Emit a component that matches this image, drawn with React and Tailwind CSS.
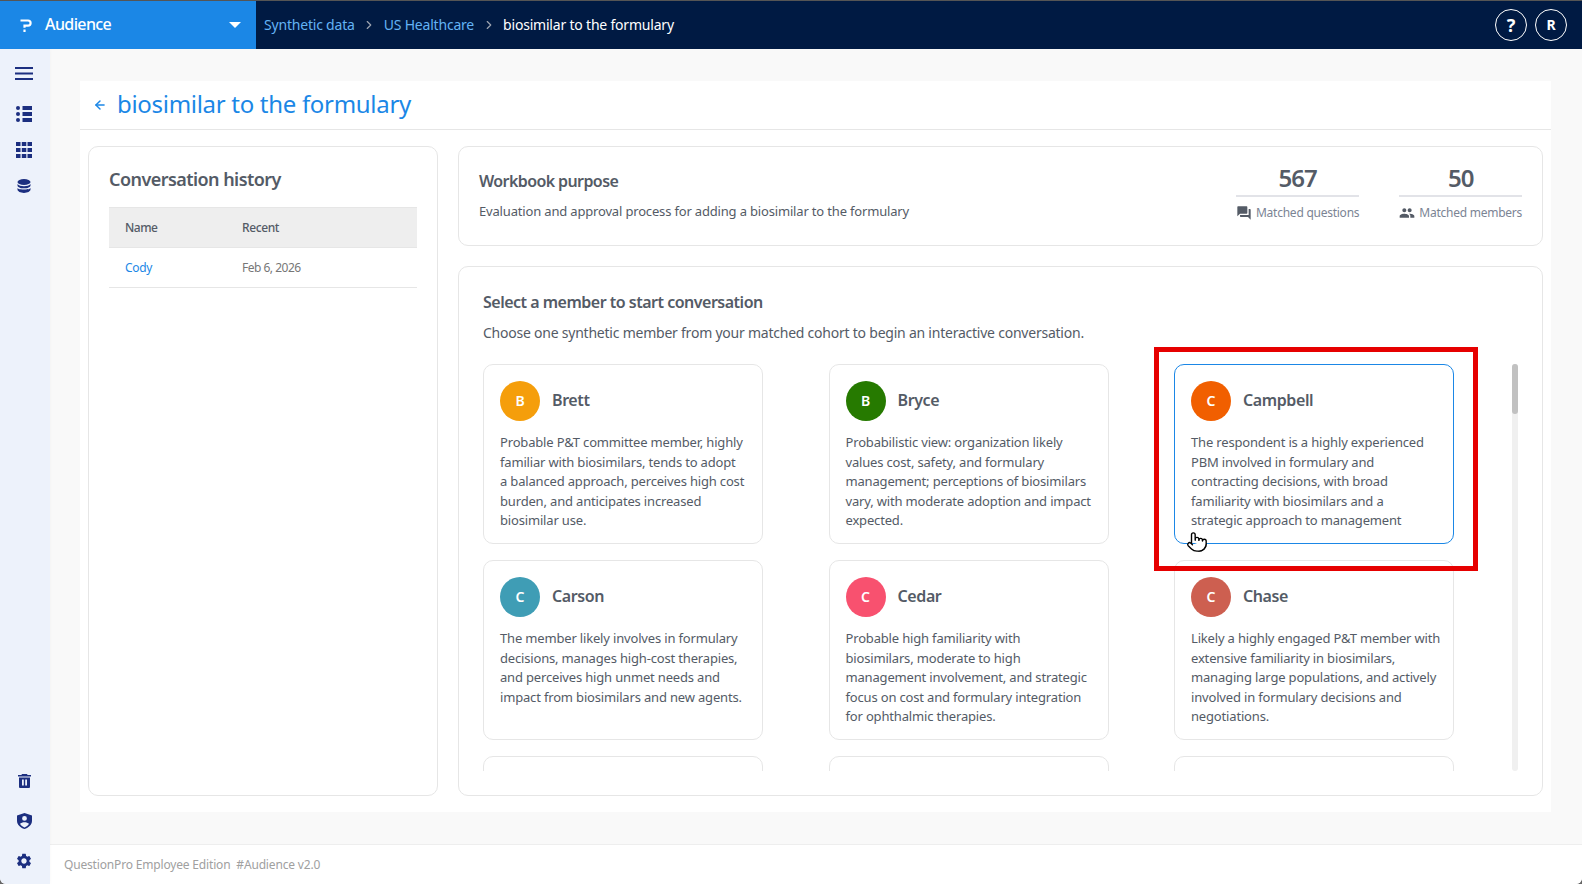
import { MdSettings, MdPeople, MdQuestionAnswer } from 'react-icons/md'
import { ArrowLeft, ChevronRight, Pointer } from 'lucide-react'

// line breaks follow the wrap of the original cards
const MEMBERS = [
  { name: 'Brett', color: 'bg-[#f59e0b]', text: 'Probable P&T committee member, highly\nfamiliar with biosimilars, tends to adopt\na balanced approach, perceives high cost\nburden, and anticipates increased\nbiosimilar use.' },
  { name: 'Bryce', color: 'bg-[#267a00]', text: 'Probabilistic view: organization likely\nvalues cost, safety, and formulary\nmanagement; perceptions of biosimilars\nvary, with moderate adoption and impact\nexpected.' },
  { name: 'Campbell', color: 'bg-[#f15f00]', active: true, text: 'The respondent is a highly experienced\nPBM involved in formulary and\ncontracting decisions, with broad\nfamiliarity with biosimilars and a\nstrategic approach to management' },
  { name: 'Carson', color: 'bg-[#3f9db5]', text: 'The member likely involves in formulary\ndecisions, manages high-cost therapies,\nand perceives high unmet needs and\nimpact from biosimilars and new agents.' },
  { name: 'Cedar', color: 'bg-[#f8516f]', text: 'Probable high familiarity with\nbiosimilars, moderate to high\nmanagement involvement, and strategic\nfocus on cost and formulary integration\nfor ophthalmic therapies.' },
  { name: 'Chase', color: 'bg-[#cd5f50]', text: 'Likely a highly engaged P&T member with\nextensive familiarity in biosimilars,\nmanaging large populations, and actively\ninvolved in formulary decisions and\nnegotiations.' },
]

function MemberCard({ member }) {
  return (
    <div className={`h-[180px] w-[280px] rounded-[10px] border bg-white px-4 pt-4 ${member.active ? 'border-[#1b87e6]' : 'border-[#e6e6e6]'}`}>
      <div className="flex items-center gap-3">
        <div className={`flex h-10 w-10 items-center justify-center rounded-full text-sm font-semibold text-white ${member.color}`}>{member.name[0]}</div>
        <div className="pb-0.5 text-base font-semibold tracking-[-0.4px] text-[#545b66]">{member.name}</div>
      </div>
      <p className="mt-3 whitespace-pre text-[13px] leading-[19.5px] text-[#545b66]">{member.text}</p>
    </div>
  )
}

function Stat({ value, icon, label }) {
  return (
    <div>
      <div className="border-b-2 border-[#e2e3e8] pb-px text-center text-2xl font-semibold tracking-[-1px] text-[#545b66]">{value}</div>
      <div className="mt-2 flex items-center gap-1 text-xs tracking-[-0.25px] text-[#7b8494]">{icon}{label}</div>
    </div>
  )
}

function App() {
  return (
    <div className="relative h-[884px] w-[1582px] overflow-hidden bg-[#666] font-['Noto_Sans',sans-serif] tracking-[-0.17px]">
      <div className="flex h-full flex-col overflow-hidden rounded-b-[6px] bg-[#f9f9f9]">
        <div className="h-px bg-[#555]" />
        <header className="flex h-12 items-center bg-[#001a43] text-sm tracking-[-0.2px]">
          <div className="flex h-full w-[256px] items-center bg-[#1b87e6] pl-[20px] pr-[15px] text-white">
            <svg viewBox="0 0 12 13" className="h-[13px] w-3" fill="none" stroke="white" strokeWidth="2.2"><path d="M0.5 1.5h7.5a2.6 2.6 0 0 1 0 5.2H4.500v2" /><path d="M4.500 10.500v2.500" /></svg>
            <span className="ml-[13px] pb-0.5 text-base font-medium tracking-[-0.6px]">Audience</span>
            <span className="ml-auto h-0 w-0 border-x-[6px] border-t-[6px] border-x-transparent border-t-white" />
          </div>
          <div className="ml-2 flex items-center gap-[7.5px] pb-px">
            <span className="text-[#63b3f5]">Synthetic data</span>
            <ChevronRight size={14} className="text-[#9ca3af]" />
            <span className="text-[#63b3f5]">US Healthcare</span>
            <ChevronRight size={14} className="text-[#9ca3af]" />
            <span className="text-white">biosimilar to the formulary</span>
          </div>
          <div className="ml-auto mr-[15px] flex gap-2">
            <div className="flex h-8 w-8 items-center justify-center rounded-full border border-white text-lg font-bold text-white">?</div>
            <div className="flex h-8 w-8 items-center justify-center rounded-full border border-white text-sm font-bold text-white">R</div>
          </div>
        </header>

        <div className="flex min-h-0 flex-1">
          <aside className="z-10 flex w-[50px] flex-col items-center bg-[#edf2fb] pb-3.5 pr-0.5 pt-[18px] text-[#1c2f80] shadow-[1px_0_3px_rgba(0,0,0,0.02)]">
            <svg viewBox="0 0 18 13" className="h-[13px] w-[18px]" fill="currentColor"><rect width="18" height="2" /><rect y="5.5" width="18" height="2" /><rect y="11" width="18" height="2" /></svg>
            <svg viewBox="0 0 16 16" className="mt-[26px] h-4 w-4" fill="currentColor">
              <circle cx="2" cy="2" r="2" /><circle cx="2" cy="8" r="2" /><circle cx="2" cy="14" r="2" />
              <rect x="6.5" width="9.5" height="4" /><rect x="6.5" y="6" width="9.5" height="4" /><rect x="6.5" y="12" width="9.5" height="4" />
            </svg>
            <svg viewBox="0 0 16 16" className="mt-5 h-4 w-4" fill="currentColor">
              <rect width="4.5" height="4" /><rect x="5.8" width="4.5" height="4" /><rect x="11.5" width="4.5" height="4" />
              <rect y="6" width="4.5" height="4" /><rect x="5.8" y="6" width="4.5" height="4" /><rect x="11.5" y="6" width="4.5" height="4" />
              <rect y="12" width="4.5" height="4" /><rect x="5.8" y="12" width="4.5" height="4" /><rect x="11.5" y="12" width="4.5" height="4" />
            </svg>
            <svg viewBox="0 0 14 14" className="mt-[21px] h-3.5 w-3.5" fill="currentColor">
              <ellipse cx="7" cy="3" rx="6.5" ry="3" />
              <path d="M0.5 5v1.4C0.5 8 3.4 9.3 7 9.3s6.5-1.3 6.5-2.9V5C12.4 6.6 9.8 7.2 7 7.2S1.6 6.6 0.5 5z" />
              <path d="M0.5 9v1.6C0.5 12.4 3.4 14 7 14s6.5-1.6 6.5-3.4V9c-1.1 1.6-3.7 1.4-6.5 1.4S1.6 10.6 0.5 9z" />
            </svg>
            <svg viewBox="0 0 13 14" className="mt-auto h-3.5 w-[13px]" fill="currentColor">
              <path fillRule="evenodd" d="M4 0h5l.6 1H13v1.6H0V1h3.4L4 0zM1 3.4h11V13a1 1 0 0 1-1 1H2a1 1 0 0 1-1-1V3.4zM4 5.5v6h1.8v-6H4zm3.2 0v6H9v-6H7.2z" />
            </svg>
            <svg viewBox="0 0 15 16" className="mt-[25px] h-4 w-[15px]" fill="currentColor">
              <path fillRule="evenodd" d="M7.5 0L15 2.6v5.2c0 3.8-3.2 7-7.5 8.2C3.2 14.8 0 11.6 0 7.8V2.6L7.5 0zM7.5 3a2.4 2.4 0 1 0 0 4.8 2.4 2.4 0 0 0 0-4.8zM3 10.8c1 1.8 2.6 3 4.5 3.6 1.9-.6 3.500-1.800 4.500-3.600-1-1-2.700-1.600-4.500-1.600s-3.500.6-4.500 1.600z" />
            </svg>
            <MdSettings className="mt-[23px] text-lg" />
          </aside>

          <div className="flex min-w-0 flex-1 flex-col">
            <main className="mb-8 ml-[30px] mr-[31px] mt-8 flex min-h-0 flex-1 flex-col bg-white">
              <div className="box-content flex h-12 items-center border-b border-[#e6e6e6] pl-[13px] text-[#1b87e6]">
                <ArrowLeft size={14} strokeWidth={2.5} />
                <h1 className="ml-[10px] pb-0.5 text-2xl tracking-[-0.3px]">biosimilar to the formulary</h1>
              </div>
              <div className="flex min-h-0 flex-1 gap-5 px-2 pb-4 pt-4">
                <section className="w-[350px] rounded-[10px] border border-[#e6e6e6] px-5 pt-[18px]">
                  <h2 className="text-lg font-semibold tracking-[-0.55px] text-[#545b66]">Conversation history</h2>
                  <table className="mt-3.5 w-full text-xs">
                    <thead>
                      <tr className="h-10 border-y border-[#e6e6e6] bg-[#eeeeee] text-left text-[#545b66]">
                        <th className="w-[133px] pl-4 font-medium tracking-[-0.5px]">Name</th>
                        <th className="font-medium tracking-[-0.4px]">Recent</th>
                      </tr>
                    </thead>
                    <tbody>
                      <tr className="h-10 border-b border-[#e6e6e6]">
                        <td className="pl-4 tracking-[-0.3px] text-[#1b87e6]">Cody</td>
                        <td className="tracking-[-0.5px] text-[#777]">Feb 6, 2026</td>
                      </tr>
                    </tbody>
                  </table>
                </section>
                <div className="flex min-w-0 flex-1 flex-col gap-5">
                  <section className="flex h-[100px] items-start justify-between rounded-[10px] border border-[#e6e6e6] px-5">
                    <div className="pt-[22px]">
                      <h2 className="text-base font-semibold tracking-[-0.6px] text-[#545b66]">Workbook purpose</h2>
                      <p className="mt-[9px] text-[13px] text-[#545b66]">Evaluation and approval process for adding a biosimilar to the formulary</p>
                    </div>
                    <div className="flex gap-10 pt-[15px]">
                      <Stat value="567" icon={<MdQuestionAnswer className="text-base text-[#545b66]" />} label="Matched questions" />
                      <Stat value="50" icon={<MdPeople className="text-base text-[#545b66]" />} label="Matched members" />
                    </div>
                  </section>
                  <section className="flex min-h-0 flex-1 flex-col rounded-[10px] border border-[#e6e6e6] pl-6 pt-[23px]">
                    <h2 className="text-base font-semibold tracking-[-0.5px] text-[#545b66]">Select a member to start conversation</h2>
                    <p className="mt-[9px] text-sm tracking-[-0.23px] text-[#545b66]">Choose one synthetic member from your matched cohort to begin an interactive conversation.</p>
                    <div className="mt-[21px] flex h-[407px] overflow-hidden">
                      <div className="grid w-[972px] shrink-0 grid-cols-[280px_280px_280px] content-start gap-x-[65.5px] gap-y-4">
                        {MEMBERS.map(m => <MemberCard key={m.name} member={m} />)}
                        <div className="h-[180px] rounded-[10px] border border-[#e6e6e6]" />
                        <div className="h-[180px] rounded-[10px] border border-[#e6e6e6]" />
                        <div className="h-[180px] rounded-[10px] border border-[#e6e6e6]" />
                      </div>
                      <div className="ml-[57px] h-full w-1.5 shrink-0 rounded bg-[#f0f0f0]"><div className="h-[50px] rounded bg-[#c1c1c1]" /></div>
                    </div>
                  </section>
                </div>
              </div>
            </main>
            <footer className="flex h-10 items-center border-t border-[#eeeeee] bg-white pl-3.5 text-xs text-[#a0a0a0]">QuestionPro Employee Edition&nbsp;&nbsp;#Audience v2.0</footer>
          </div>
        </div>
      </div>

      {/* annotation box and mouse pointer over the screenshot */}
      <div className="absolute left-[1154px] top-[347px] h-[224px] w-[324px] border-[5px] border-[#e60000]" />
      <Pointer size={22} strokeWidth={1.5} fill="white" className="absolute left-[1186px] top-[531px] text-black" />
    </div>
  )
}

export default App
